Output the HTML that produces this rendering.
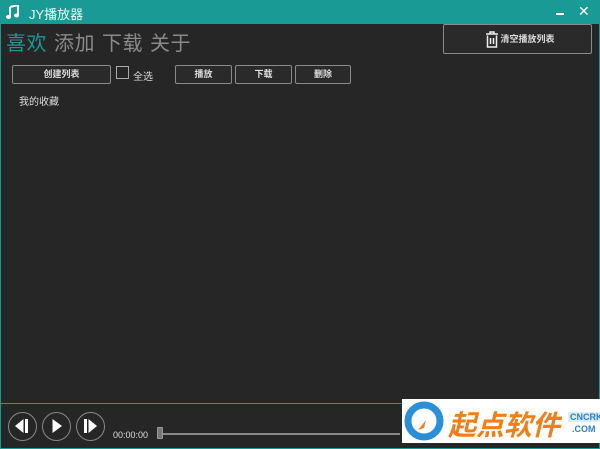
<!DOCTYPE html>
<html><head><meta charset="utf-8"><style>
*{margin:0;padding:0;box-sizing:border-box}
body{width:600px;height:449px;overflow:hidden;background:#262626;font-family:"Liberation Sans","Noto Sans CJK SC",sans-serif;position:relative}
.frame{position:absolute;left:0;top:0;width:600px;height:449px;border:1px solid #1a9a94;border-top:none}
.title{position:absolute;left:0;top:0;width:600px;height:24px;background:#1a9a94;color:#e8f8f7;font-size:13px}
.title .t{position:absolute;left:29px;top:4px}
.btn{position:absolute;border:1px solid #8a8a8a;border-radius:2px;background:#2a2a2a;color:#ddd;font-size:9px;text-align:center;font-weight:bold}
.tabs{position:absolute;left:6px;top:27px;font-size:20px;color:#8a8a8a;letter-spacing:0.5px}
.tabs span{margin-right:7px}
.tabs .a{color:#1a9a94}
.lbl{position:absolute;font-size:10px;color:#ddd}
.line{position:absolute;left:1px;top:403px;width:598px;height:1px;background:#1a9a94}
.circ{position:absolute;top:412px;width:29px;height:29px;border:1.5px solid #888;border-radius:50%}
.circ svg{position:absolute;left:1px;top:1px}
</style></head><body>
<div class="frame"></div>
<div class="title">
<svg style="position:absolute;left:6px;top:5px" width="13" height="14" viewBox="0 0 13 14"><path d="M4 2 L12 0 V10" stroke="#fff" stroke-width="2" fill="none"/><path d="M4 2 V12" stroke="#fff" stroke-width="2"/><ellipse cx="2.5" cy="12" rx="2.5" ry="2" fill="#fff"/><ellipse cx="10.5" cy="10.5" rx="2.5" ry="2" fill="#fff"/></svg>
<span class="t">JY播放器</span>
<div style="position:absolute;left:556px;top:13px;width:8px;height:2px;background:#fff"></div>
<div style="position:absolute;left:578px;top:3px;color:#fff;font-size:14px">✕</div>
</div>
<div class="tabs"><span class="a">喜欢</span><span>添加</span><span>下载</span><span>关于</span></div>
<div class="btn" style="left:443px;top:24px;width:149px;height:30px;line-height:28px;padding-left:20px">清空播放列表
<svg style="position:absolute;left:41px;top:6px" width="14" height="17" viewBox="0 0 14 17"><path d="M1 3H13M5 3V1H9V3M2.5 4.5V16H11.5V4.5M5.5 7V13M8.5 7V13" stroke="#eee" stroke-width="1.5" fill="none"/></svg></div>
<div class="btn" style="left:12px;top:65px;width:99px;height:19px;line-height:17px">创建列表</div>
<div style="position:absolute;left:116px;top:66px;width:13px;height:13px;border:1px solid #aaa"></div>
<div class="lbl" style="left:133px;top:68px">全选</div>
<div class="btn" style="left:175px;top:65px;width:57px;height:19px;line-height:17px">播放</div>
<div class="btn" style="left:235px;top:65px;width:57px;height:19px;line-height:17px">下载</div>
<div class="btn" style="left:295px;top:65px;width:56px;height:19px;line-height:17px">删除</div>
<div class="lbl" style="left:19px;top:93px">我的收藏</div>
<div class="line"></div>
<div class="circ" style="left:8px"><svg width="24" height="24" viewBox="0 0 24 24"><path d="M13.5 5 L5 12 L13.5 19Z" fill="#fff"/><rect x="15" y="5" width="3" height="14" fill="#fff"/></svg></div>
<div class="circ" style="left:42px"><svg width="24" height="24" viewBox="0 0 24 24"><path d="M8.5 5 L18 12 L8.5 19Z" fill="#fff"/></svg></div>
<div class="circ" style="left:76px"><svg width="24" height="24" viewBox="0 0 24 24"><rect x="6" y="5" width="3" height="14" fill="#fff"/><path d="M10.5 5 L19 12 L10.5 19Z" fill="#fff"/></svg></div>
<div class="lbl" style="left:113px;top:430px;font-size:9px">00:00:00</div>
<div style="position:absolute;left:160px;top:433px;width:240px;height:2px;background:#888"></div>
<div style="position:absolute;left:157px;top:427px;width:6px;height:12px;background:#777;border:1px solid #999;border-radius:1px"></div>
<div style="position:absolute;left:402px;top:399px;width:198px;height:44px;background:#fff">
<svg style="position:absolute;left:2px;top:1px" width="40" height="42" viewBox="0 0 40 42"><circle cx="20" cy="21" r="16" fill="none" stroke="#2a8fd8" stroke-width="7"/><path d="M14 30 L22 20 L20 28Z" fill="#f08020"/></svg>
<div style="position:absolute;left:46px;top:5px;font-size:28px;font-weight:bold;color:#f07f1a;font-style:italic">起点软件</div>
<div style="position:absolute;left:166px;top:13px;font-size:9px;font-weight:bold;color:#2a7fd0;background:#d9ecfa;padding:0 2px">CNCRK</div>
<div style="position:absolute;left:170px;top:25px;font-size:9px;font-weight:bold;color:#2a7fd0">.COM</div>
</div>
</body></html>
